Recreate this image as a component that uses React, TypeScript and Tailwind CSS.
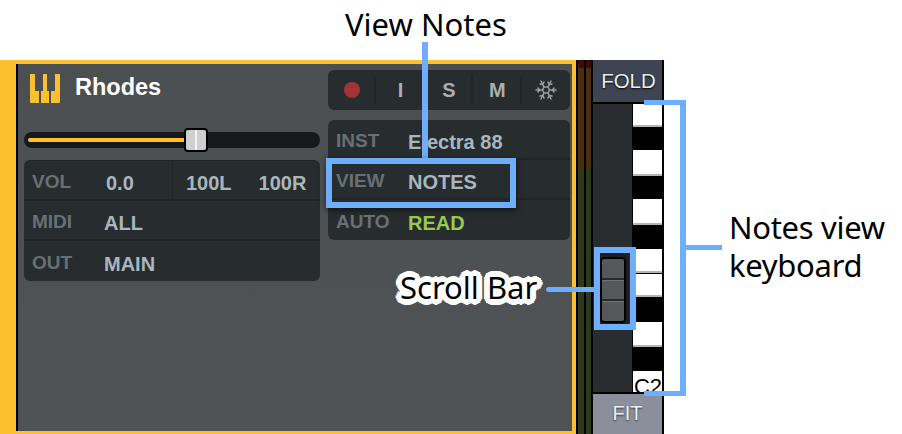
import { Snowflake } from 'lucide-react';

const KEYS: { h: string; white: boolean; label?: string }[] = [
    { h: 'h-[23px]', white: true },
    { h: 'h-[23px]', white: false },
    { h: 'h-[26px]', white: true },
    { h: 'h-[23px]', white: false },
    { h: 'h-[26px]', white: true },
    { h: 'h-[24px]', white: false },
    { h: 'h-[24px]', white: true },
    { h: 'h-[1px]', white: false },
    { h: 'h-[23px]', white: true },
    { h: 'h-[25px]', white: false },
    { h: 'h-[25px]', white: true },
    { h: 'h-[24px]', white: false },
    { h: 'h-[21px]', white: true, label: 'C2' },
];

function PianoIcon() {
    return (
        <svg width="30" height="30" viewBox="0 0 30 30" fill="#fcc02e">
            <path d="M0 1h5v17h4v12H1a1 1 0 0 1-1-1z" />
            <path d="M13 1h4v17h2v12h-8V18h2z" />
            <path d="M25 1h5v28a1 1 0 0 1-1 1h-8V18h4z" />
        </svg>
    );
}

function Row({ label, value, valueClass, last }: { label: string; value: string; valueClass?: string; last?: boolean }) {
    return (
        <div className={`flex items-center h-[40px] pt-[5px] ${last ? '' : 'border-b-2 border-[#1f2426]'}`}>
            <span className="w-[80px] pl-2 text-[#687074] text-[19px]">{label}</span>
            <span className={valueClass ?? 'text-[#aab6bd] text-[20px]'}>{value}</span>
        </div>
    );
}

function Cell({ children, last }: { children: React.ReactNode; last?: boolean }) {
    return (
        <div className="relative flex items-center justify-center h-full">
            {children}
            {!last && <div className="absolute right-0 top-[6px] w-[2px] h-[28px] bg-[#1f2426]" />}
        </div>
    );
}

export default function App() {
    return (
        <div className="relative w-[902px] h-[434px] bg-white overflow-hidden font-['Liberation_Sans',sans-serif]">
            <div className="flex pt-[60px] h-full">
                {/* track panel */}
                <div className="flex w-[576px] bg-[#fcc02e] pl-[16px] pt-[4px] pb-[3px] pr-[4px]">
                    <div className="flex flex-1 gap-2 border-l-2 border-black bg-[linear-gradient(#4c4f52,#505356)] pl-[6px] font-bold">
                        <div className="w-[296px]">
                            <div className="flex items-center h-[48px] pl-[6px] gap-[15px]">
                                <PianoIcon />
                                <span className="text-white text-[23.5px]">Rhodes</span>
                            </div>
                            <div className="relative h-[16px] mt-[20px] rounded-full bg-[#15191b]">
                                <div className="absolute left-[4px] top-[6px] w-[160px] h-[4px] bg-[#fcc02e] rounded-full" />
                                <div className="absolute left-[160px] -top-[4px] w-[24px] h-[24px] rounded-[4px] border-2 border-black bg-[#cfcfcf] flex justify-center">
                                    <div className="w-[2px] h-full bg-[#f2f2f2]" />
                                </div>
                            </div>
                            <div className="mt-[12px] rounded-[6px] bg-[#272c2f] border-t border-[#1f2426]">
                                <div className="flex items-center h-[40px] border-b-2 border-[#1f2426]">
                                    <span className="w-[82px] pl-2 pt-[5px] text-[#687074] text-[19px]">VOL</span>
                                    <span className="w-[66px] pt-[5px] text-[#aab6bd] text-[20px]">0.0</span>
                                    <div className="w-[1px] h-full bg-[#1f2426]" />
                                    <span className="ml-[13px] pt-[5px] text-[#aab6bd] text-[20px]">100L</span>
                                    <span className="ml-[27px] pt-[5px] text-[#aab6bd] text-[20px]">100R</span>
                                </div>
                                <Row label="MIDI" value="ALL" />
                                <Row label="OUT" value="MAIN" last />
                            </div>
                        </div>
                        <div className="w-[242px] pt-[6px]">
                            <div className="grid grid-cols-5 items-center h-[40px] rounded-[6px] bg-[#272c2f] text-[#aaaeb0] text-[20px]">
                                <Cell><div className="w-[16px] h-[16px] rounded-full bg-[#a23434]" /></Cell>
                                <Cell>I</Cell>
                                <Cell>S</Cell>
                                <Cell>M</Cell>
                                <Cell last><Snowflake size={24} strokeWidth={1.5} color="#9a9fa2" /></Cell>
                            </div>
                            <div className="mt-[10px] rounded-[6px] bg-[#272c2f]">
                                <Row label="INST" value="Electra 88" />
                                <Row label="VIEW" value="NOTES" />
                                <Row label="AUTO" value="READ" valueClass="text-[#98c950] text-[20px]" last />
                            </div>
                        </div>
                    </div>
                </div>
                {/* level meter */}
                <div className="flex w-[17px] gap-[2px] bg-black px-[2px]">
                    {[0, 1].map(i => (
                        <div key={i} className="flex flex-col w-[6px]">
                            <div className="h-[8px] bg-[#3f0a06]" />
                            <div className="h-[102px] bg-[#4a2f0b]" />
                            <div className="flex-1 bg-[#2c3a19]" />
                        </div>
                    ))}
                </div>
                {/* keyboard column */}
                <div className="flex flex-col w-[71px] bg-black pr-[2px]">
                    <div className="flex items-center justify-center h-[42px] bg-[#3f4452] text-[#e4eef2] text-[20.5px] pl-[2px] [text-shadow:0_1px_2px_#000]">FOLD</div>
                    <div className="flex h-[288px] mt-[2px]">
                        <div className="w-[41px] bg-[#292d2f] relative">
                            <div className="absolute left-[6px] top-[149px] w-[30px] h-[71px] bg-[#1c1f21] px-[1px] pt-[4px]">
                                <div className="w-[26px] h-[66px] rounded-[4px] border-2 border-black bg-[#55585a] flex flex-col">
                                    <div className="flex-1 border-b-2 border-[#26282a]" />
                                    <div className="flex-1 border-t border-b-2 border-t-[#707375] border-b-[#26282a]" />
                                    <div className="flex-1 border-t border-[#707375]" />
                                </div>
                            </div>
                        </div>
                        <div className="flex-1 flex flex-col pl-[1px] bg-black">
                            {KEYS.map((k, i) => (
                                <div key={i} className={`${k.h} ${k.white ? 'bg-white' : 'bg-black'} ${k.white && !k.label ? 'border-b-2 border-[#b5b5b5]' : ''} ${k.label ? 'overflow-hidden' : ''} text-black text-[22px] font-normal leading-[32px] pl-[1px]`}>
                                    {k.label}
                                </div>
                            ))}
                        </div>
                    </div>
                    <div className="flex items-center justify-center flex-1 mt-[2px] pb-[3px] bg-[#8b8f9b] text-[#e8f2f5] text-[20px] [text-shadow:0_1px_2px_#333]">FIT</div>
                </div>
            </div>

            {/* annotations */}
            <div className="absolute left-[345px] top-[5px] text-black text-[31px] leading-[38px] font-['Noto_Sans',sans-serif]">View Notes</div>
            <div className="absolute left-[422px] top-[42px] w-[6px] h-[118px] bg-[#6eaefc]" />
            <div className="absolute left-[326px] top-[158px] w-[190px] h-[50px] border-[6px] border-[#6eaefc] shadow-[0_2px_6px_rgba(0,0,0,0.6)]" />

            <div className="absolute left-[594px] top-[247px] w-[42px] h-[83px] border-[6px] border-[#6eaefc]" />
            <div className="absolute left-[546px] top-[287px] w-[48px] h-[5px] bg-[#6eaefc] rounded-l-full" />
            <div className="absolute left-[400px] top-[268px] text-black text-[31px] leading-[38px] font-['Noto_Sans',sans-serif] [text-shadow:6px_0_0_#fff,-6px_0_0_#fff,0_6px_0_#fff,0_-6px_0_#fff,4px_4px_0_#fff,-4px_4px_0_#fff,4px_-4px_0_#fff,-4px_-4px_0_#fff,5px_2px_0_#fff,-5px_2px_0_#fff,5px_-2px_0_#fff,-5px_-2px_0_#fff,2px_5px_0_#fff,-2px_5px_0_#fff,2px_-5px_0_#fff,-2px_-5px_0_#fff,3px_0_0_#fff,-3px_0_0_#fff,0_3px_0_#fff,0_-3px_0_#fff]">Scroll Bar</div>

            <div className="absolute left-[644px] top-[100px] w-[42px] h-[296px] border-y-[5px] border-r-[6px] border-[#6eaefc]" />
            <div className="absolute left-[686px] top-[245px] w-[36px] h-[5px] bg-[#6eaefc]" />
            <div className="absolute left-[729px] top-[208px] text-black text-[31px] leading-[38px] font-['Noto_Sans',sans-serif] tracking-[-0.3px]">
                Notes view<br />keyboard
            </div>
        </div>
    );
}
